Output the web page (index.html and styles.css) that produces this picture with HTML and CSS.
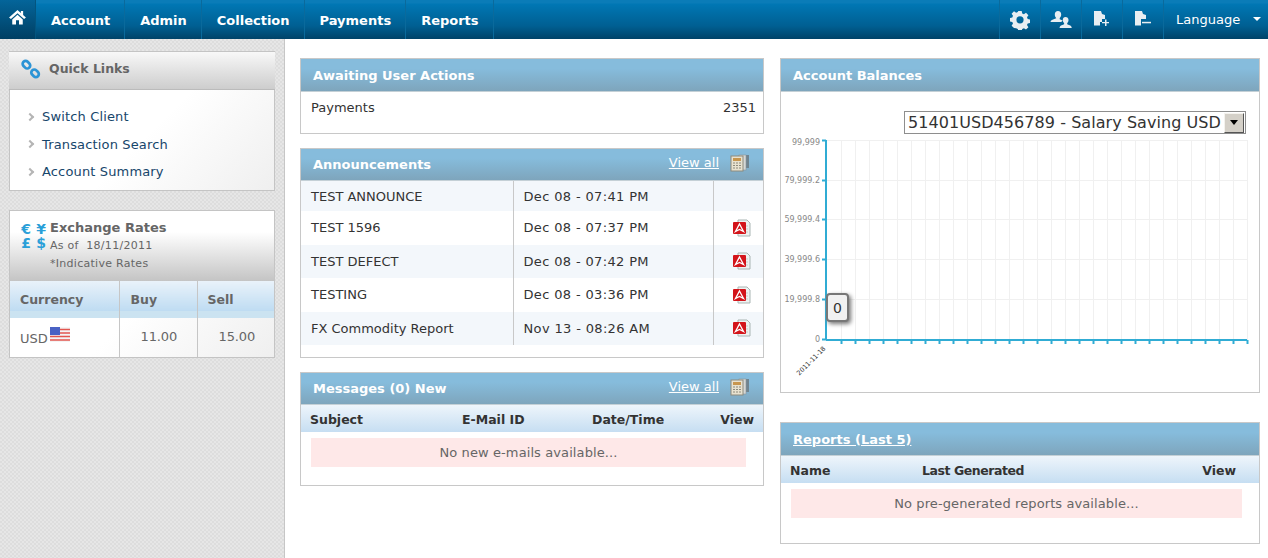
FILE: index.html
```html
<!DOCTYPE html>
<html lang="en">
<head>
  <meta charset="UTF-8">
  <title>Dashboard</title>
  <link rel="stylesheet" href="styles.css">
</head>
<body>

  <div class="topbar">
    <a class="home">
      <svg width="17" height="15" viewBox="0 0 18 16"><path d="M9 0 L0 8 L2 9.500 L9 3.400 L16 9.500 L18 8 L15 5.300 V1 H12.600 V3.200 Z" fill="#fff"/><path d="M9 5 L3.400 10 V15.500 H7.400 V11 H10.600 V15.500 H14.600 V10 Z" fill="#fff"/></svg>
    </a>
    <a class="nav-item">Account</a>
    <a class="nav-item">Admin</a>
    <a class="nav-item">Collection</a>
    <a class="nav-item">Payments</a>
    <a class="nav-item">Reports</a>
    <div class="spacer"></div>
    <a class="tool">
      <svg width="20" height="20" viewBox="0 0 20 20"><path fill="#e8eef2" fill-rule="evenodd" d="M8.300 1h3.400l.5 2.500 1.700.7 2.100-1.400 2.400 2.400-1.400 2.100.7 1.700 2.300.5v3.400l-2.300.5-.7 1.700 1.400 2.100-2.400 2.400-2.100-1.400-1.700.7-.5 2.300H8.300l-.5-2.300-1.700-.7L4 18.100l-2.400-2.400L3 13.600l-.7-1.700L0 11.400V8l2.300-.5L3 5.800 1.600 3.700 4 1.300l2.100 1.400 1.700-.7zM10 6.200a3.600 3.600 0 1 0 0 7.200 3.600 3.600 0 0 0 0-7.200z"/></svg>
    </a>
    <a class="tool">
      <svg width="22" height="19" viewBox="0 0 22 19"><path fill="#e8eef2" d="M8 1c2 0 3.200 1.500 3.200 3.400 0 1.500-.6 2.800-1.500 3.500v1.300l3 1.300-1.500 1.500H0.500c.2-1.700 1.800-2.300 5.700-3.700V7.900C5.300 7.200 4.800 5.900 4.800 4.400 4.800 2.500 6 1 8 1z"/><path fill="#e8eef2" d="M15.500 7c1.800 0 3 1.300 3 3 0 1.400-.5 2.500-1.300 3.100v1.200c2.600.9 4.300 1.500 4.600 3.700H9.500c.3-2.200 2-2.800 4.600-3.700v-1.200c-.8-.6-1.300-1.700-1.300-3.100C12.800 8.300 13.800 7 15.500 7z"/></svg>
    </a>
    <a class="tool">
      <svg width="18" height="18" viewBox="0 0 18 18"><path fill="#e8eef2" d="M1 1h7l1 3 3 1v4H9v3H7v3.500H1z"/><path fill="#e8eef2" d="M12 9.500h1.500V12H16v1.300h-2.500V16H12v-2.700H9V12h3z"/></svg>
    </a>
    <a class="tool">
      <svg width="18" height="18" viewBox="0 0 18 18"><path fill="#e8eef2" d="M1 1h7l1 3 3 1v4H7v6.500H1z"/><rect x="8" y="11.800" width="9" height="1.500" fill="#e8eef2"/></svg>
    </a>
    <a class="lang">Language<span class="caret"></span></a>
  </div>

  <div class="page">
    <div class="sidebar">

      <div class="side-box">
        <div class="side-head">
          <svg width="20" height="20" viewBox="0 0 22 22" fill="none" stroke="#2c94d6" stroke-width="3"><rect x="1.500" y="3" width="9" height="6.500" rx="3.200" transform="rotate(45 6 6.200)"/><rect x="11" y="12.500" width="9" height="6.500" rx="3.200" transform="rotate(45 15.500 15.700)"/></svg>
          <span>Quick Links</span>
        </div>
        <ul class="side-links">
          <li><i class="chev"></i>Switch Client</li>
          <li><i class="chev"></i>Transaction Search</li>
          <li><i class="chev"></i>Account Summary</li>
        </ul>
      </div>

      <div class="side-box rates">
        <div class="rates-head">
          <div class="cur-symbols"><span>€</span><span>¥</span><span>£</span><span>$</span></div>
          <div>
            <div class="rates-title">Exchange Rates</div>
            <div class="rates-sub">As of &nbsp;18/11/2011</div>
            <div class="rates-note">*Indicative Rates</div>
          </div>
        </div>
        <table class="rates-table">
          <tr>
            <th class="c1">Currency</th>
            <th class="c2">Buy</th>
            <th>Sell</th>
          </tr>
          <tr>
            <td class="c1">USD
              <svg class="flag" width="20" height="15" viewBox="0 0 20 15"><rect width="20" height="15" fill="#f4f4f4"/><path d="M0 2.500h20M0 6h20M0 9.500h20M0 13h20" stroke="#e2564f" stroke-width="1.600"/><rect width="10" height="8" fill="#4a62c4"/></svg>
            </td>
            <td class="num c2">11.00</td>
            <td class="num">15.00</td>
          </tr>
        </table>
      </div>
    </div>

    <div class="col-mid">
      <div class="panel">
        <div class="panel-head"><h3>Awaiting User Actions</h3></div>
        <div class="await-row"><span>Payments</span><span>2351</span></div>
      </div>

      <div class="panel">
        <div class="panel-head short">
          <h3>Announcements</h3>
          <a class="view-all">View all</a>
          <svg class="news" width="20" height="18" viewBox="0 0 20 18"><use href="#news-icon"/></svg>
        </div>
        <table class="announce">
          <tr class="first shade"><td class="a1">TEST ANNOUNCE</td><td class="a2">Dec 08 - 07:41 PM</td><td class="a3"></td></tr>
          <tr><td class="a1">TEST 1596</td><td class="a2">Dec 08 - 07:37 PM</td><td class="a3"><svg class="pdf" width="19" height="18" viewBox="0 0 19 18"><use href="#pdf-icon"/></svg></td></tr>
          <tr class="shade"><td class="a1">TEST DEFECT</td><td class="a2">Dec 08 - 07:42 PM</td><td class="a3"><svg class="pdf" width="19" height="18" viewBox="0 0 19 18"><use href="#pdf-icon"/></svg></td></tr>
          <tr><td class="a1">TESTING</td><td class="a2">Dec 08 - 03:36 PM</td><td class="a3"><svg class="pdf" width="19" height="18" viewBox="0 0 19 18"><use href="#pdf-icon"/></svg></td></tr>
          <tr class="shade"><td class="a1">FX Commodity Report</td><td class="a2">Nov 13 - 08:26 AM</td><td class="a3"><svg class="pdf" width="19" height="18" viewBox="0 0 19 18"><use href="#pdf-icon"/></svg></td></tr>
        </table>
      </div>

      <div class="panel">
        <div class="panel-head short">
          <h3>Messages (0) New</h3>
          <a class="view-all">View all</a>
          <svg class="news" width="20" height="18" viewBox="0 0 20 18"><use href="#news-icon"/></svg>
        </div>
        <div class="sub-head msg-cols"><span>Subject</span><span>E-Mail ID</span><span>Date/Time</span><span class="end">View</span></div>
        <div class="empty">No new e-mails available...</div>
      </div>
    </div>

    <div class="col-right">
      <div class="panel balances">
        <div class="panel-head"><h3>Account Balances</h3></div>
        <div class="select-row">
          <div class="fake-select">
            <span>51401USD456789 - Salary Saving USD</span>
            <span class="sel-btn"><i></i></span>
          </div>
        </div>
        <div class="chart">
          <svg id="chart" width="478" height="250" viewBox="0 0 478 250"></svg>
          <div class="tip">0</div>
        </div>
      </div>

      <div class="panel reports">
        <div class="panel-head"><h3><a>Reports (Last 5)</a></h3></div>
        <div class="sub-head rep-cols"><span>Name</span><span class="gen">Last Generated</span><span class="end">View</span></div>
        <div class="empty wide">No pre-generated reports available...</div>
      </div>
    </div>
  </div>

  <svg width="0" height="0" class="defs">
    <symbol id="pdf-icon" viewBox="0 0 19 18">
      <path d="M6 1h9l3 3v13H6z" fill="#eef2f1" stroke="#a9b5b3"/>
      <path d="M14 7h2M14 10h2M14 13h2" stroke="#c3cfcc"/>
      <rect x="1" y="3" width="13" height="12" rx="1" fill="#d3141a"/>
      <path d="M7.500 5 L11.500 12.500 L7.500 10.500 L3.500 12.500 Z" fill="none" stroke="#fff" stroke-width="1.300"/>
    </symbol>
    <symbol id="news-icon" viewBox="0 0 20 18">
      <rect x="12" y="1" width="7" height="13" fill="#6f8490"/>
      <rect x="9" y="1" width="7" height="15" fill="#d5d8d6" stroke="#8c9498" stroke-width=".6"/>
      <rect x="1" y="2" width="12" height="15" fill="#e8e2d0" stroke="#8d8a7c"/>
      <rect x="3" y="4" width="8" height="3" fill="#c8964e"/>
      <path d="M3 9h2M6 9h2M9 9h2M3 11.500h2M6 11.500h2M9 11.500h2M3 14h2M6 14h2M9 14h2" stroke="#8d8a7c"/>
    </symbol>
  </svg>

  <script>
    // balance chart, x/y relative to the chart box
    const svg = document.getElementById('chart');
    const left = 45, right = 466, plotTop = 5, plotBottom = 205;
    const ticks = [['99,999', 5, 10], ['79,999.2', 45, 48], ['59,999.4', 84, 87], ['39,999.6', 124, 127], ['19,999.8', 164, 167], ['0', 204, 207]];
    let out = '';

    for (let x = left + 15; x <= right; x += 14) {
      out += `<line x1="${x + .5}" y1="${plotTop}" x2="${x + .5}" y2="${plotBottom}" stroke="#f0f0f0"/>`;
      out += `<line x1="${x + .5}" y1="${plotBottom}" x2="${x + .5}" y2="${plotBottom + 4}" stroke="#30acd4" stroke-width="2"/>`;
    }
    ticks.forEach(t => {
      out += `<line x1="${left}" y1="${t[1] + .5}" x2="${right}" y2="${t[1] + .5}" stroke="#f0f0f0"/>`;
      out += `<line x1="${left - 4}" y1="${t[1] + .5}" x2="${left}" y2="${t[1] + .5}" stroke="#30acd4" stroke-width="2"/>`;
      out += `<text x="${left - 6}" y="${t[2]}" text-anchor="end" class="tick">${t[0]}</text>`;
    });
    out += `<line x1="${left}" y1="${plotTop}" x2="${left}" y2="${plotBottom}" stroke="#30acd4" stroke-width="2"/>`;
    out += `<line x1="${left}" y1="${plotBottom}" x2="${right}" y2="${plotBottom}" stroke="#30acd4" stroke-width="2"/>`;
    out += `<text transform="translate(45 214) rotate(-45)" text-anchor="end" class="date">2011-11-18</text>`;
    svg.innerHTML = out;
  </script>

</body>
</html>
```

FILE: styles.css
```css
* {
  box-sizing: border-box;
}

body {
  margin: 0;
  height: 558px;
  overflow: hidden;
  font-family: "DejaVu Sans", Verdana, sans-serif;
  font-size: 13px;
  color: #333;
  background: #fff;
}

.topbar {
  display: flex;
  align-items: stretch;
  height: 39px;
  background: linear-gradient(to bottom, #0a7cb8 0, #0a7cb8 3px, #0077b4 4px, #005f92 26px, #004368 100%);
  color: #fff;
}

.home {
  display: flex;
  justify-content: center;
  padding-top: 10px;
  width: 36px;
  background: linear-gradient(to bottom, #04659a, #003f63);
  border-right: 1px solid #03557f;
}

.nav-item {
  padding: 13px 14px 0 15px;
  font-weight: bold;
  font-size: 13px;
  border-right: 1px solid #0a6a9c;
}

.spacer {
  flex: 1;
}

.tool {
  display: flex;
  justify-content: center;
  padding-top: 10px;
  width: 41px;
  border-left: 1px solid #0a6a9c;
}

.lang {
  position: relative;
  width: 105px;
  padding: 12px 0 0 12px;
  border-left: 1px solid #0a6a9c;
  font-size: 13px;
}

.caret {
  position: absolute;
  top: 17px;
  right: 7px;
  border: 4px solid transparent;
  border-top: 4px solid #fff;
  border-bottom: 0;
}

.page {
  display: flex;
  align-items: stretch;
  height: 519px;
}

.sidebar {
  width: 285px;
  padding: 12px 9px 0;
  border-right: 1px solid #c6c6c6;
  background: repeating-conic-gradient(#dddddd 0 25%, #e6e6e6 0 50%) 0 0 / 4px 4px;
}

.side-box {
  width: 266px;
  background: linear-gradient(135deg, #fff 55%, #efefef);
  border: 1px solid #c4c4c4;
}

.side-head {
  display: flex;
  align-items: center;
  gap: 8px;
  height: 38px;
  padding: 0 0 4px 12px;
  margin: 0 -1px;
  background: linear-gradient(to bottom, #f8f8f8, #cdcdcd);
  border-bottom: 1px solid #bbb;
  font-size: 12.500px;
  font-weight: bold;
  color: #666;
}

.side-links {
  list-style: none;
  margin: 0;
  padding: 13px 0 4px 17px;
}

.side-links li {
  display: flex;
  align-items: center;
  height: 27.500px;
  letter-spacing: .15px;
  color: #17466b;
}

.chev {
  width: 6px;
  height: 6px;
  margin-right: 9px;
  border-top: 2px solid #b5b5b5;
  border-right: 2px solid #b5b5b5;
  transform: rotate(45deg);
}

.rates {
  margin-top: 19px;
}

.rates-head {
  display: flex;
  gap: 4px;
  height: 70px;
  padding: 9px 0 0 11px;
  background: linear-gradient(to bottom, #fff 30%, #c4c4c4);
  color: #666;
}

.cur-symbols {
  display: grid;
  grid-template-columns: 10px 10px;
  column-gap: 5px;
  grid-auto-rows: 14px;
  width: 25px;
  height: 28px;
  margin-top: 2px;
  font-size: 14px;
  font-weight: bold;
  line-height: 14px;
  text-align: center;
  color: #2a9fd8;
}

.rates-title {
  margin-top: -1px;
  font-weight: bold;
  line-height: 18px;
}

.rates-sub, .rates-note {
  font-size: 11px;
  line-height: 18px;
  letter-spacing: .28px;
  color: #666;
}

.rates-table {
  width: 100%;
  border-collapse: collapse;
  color: #666;
}

.rates-table th {
  height: 37px;
  padding: 1px 0 0 10px;
  text-align: left;
  font-size: 12.500px;
  background: linear-gradient(to bottom, #e9f2fa 0, #bfdcf2 80%, #cbe3f1 80%);
}

.rates-table th.c2 {
  padding-left: 11px;
}

.rates-table td {
  height: 39px;
  padding: 0 0 2px 10px;
}

.rates-table .c1 {
  width: 109px;
  border-right: 1px solid #c6c6c6;
}

.rates-table .c2 {
  width: 78px;
  border-right: 1px solid #c6c6c6;
}

.rates-table td.num {
  padding-left: 21px;
  letter-spacing: -.1px;
}

.flag {
  margin-left: -2px;
  vertical-align: 1px;
}

.col-mid {
  width: 464px;
  margin: 19px 0 0 15px;
}

.col-right {
  width: 480px;
  margin: 19px 0 0 16px;
}

.panel {
  margin-bottom: 14px;
  background: #fff;
  border: 1px solid #c8c8c8;
}

.panel-head {
  display: flex;
  align-items: center;
  height: 33px;
  padding: 0 13px 0 12px;
  background: linear-gradient(to bottom, #86bcdc 30%, #7ea5bc);
  border-bottom: 1px solid #c4d0d6;
  color: #fff;
}

.panel-head.short {
  height: 32px;
}

.panel-head h3 {
  flex: 1;
  margin: 0;
  font-size: 13px;
  font-weight: bold;
}

.panel-head h3 a {
  text-decoration: underline;
}

.view-all {
  margin: -4px 11px 0 0;
  text-decoration: underline;
}

.news {
  margin-top: -4px;
}

.await-row {
  display: flex;
  justify-content: space-between;
  height: 41px;
  padding: 8px 7px 0 10px;
}

.announce {
  width: 100%;
  border-collapse: collapse;
  margin-bottom: 12px;
}

.announce td {
  height: 33.500px;
  padding: 0 0 0 10px;
}

.announce .first td {
  height: 30px;
}

.announce .shade td {
  background: #f3f7fb;
}

.announce .a1 {
  width: 212px;
  border-right: 1px solid #c8c8c8;
}

.announce .a2 {
  width: 200px;
  letter-spacing: .35px;
  border-right: 1px solid #c8c8c8;
}

.announce .a3 {
  padding: 3px 0 0 18px;
}

.sub-head {
  display: grid;
  align-items: center;
  height: 27px;
  padding: 1px 9px 0;
  background: linear-gradient(to bottom, #eef5fb, #c6def2);
  font-size: 12.500px;
  font-weight: bold;
}

.msg-cols {
  grid-template-columns: 152px 130px 1fr auto;
}

.rep-cols {
  grid-template-columns: 132px 1fr auto;
  padding-right: 23px;
}

.gen {
  letter-spacing: -.45px;
}

.empty {
  margin: 6px 17px 18px 10px;
  height: 29px;
  line-height: 29px;
  text-align: center;
  letter-spacing: .1px;
  background: #fee8e8;
  color: #666;
}

.empty.wide {
  margin-bottom: 25px;
}

.balances {
  height: 335px;
  margin-bottom: 29px;
}

.select-row {
  display: flex;
  justify-content: flex-end;
  padding: 19px 13px 0 0;
}

.fake-select {
  display: flex;
  align-items: center;
  justify-content: space-between;
  width: 342px;
  height: 23px;
  padding: 0 1px 0 3px;
  border: 1px solid #8e8e8e;
  font-size: 16px;
  letter-spacing: .06px;
  color: #333;
  white-space: nowrap;
}

.sel-btn {
  display: flex;
  align-items: center;
  justify-content: center;
  width: 20px;
  height: 20px;
  background: #d4d0c8;
  border: 1px solid;
  border-color: #f4f2ee #555 #555 #f4f2ee;
}

.sel-btn i {
  border: 4px solid transparent;
  border-top: 5px solid #000;
  border-bottom: 0;
}

.chart {
  position: relative;
  margin-top: 1px;
}

.chart svg {
  display: block;
}

.tick {
  font-size: 8px;
  fill: #888;
}

.date {
  font-size: 6.500px;
  fill: #333;
}

.tip {
  position: absolute;
  left: 45px;
  top: 158px;
  width: 23px;
  height: 29px;
  line-height: 26px;
  text-align: center;
  background: #f1f1f1;
  border: 2px solid #777;
  border-radius: 4px;
  box-shadow: 2px 2px 4px #777;
  font-size: 14px;
}

.defs {
  position: absolute;
}
```
